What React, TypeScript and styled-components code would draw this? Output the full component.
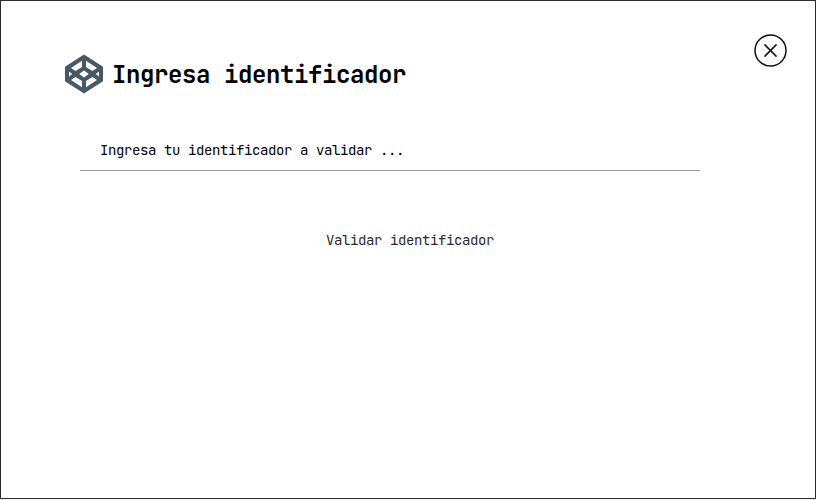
import React from "react";
import styled, { createGlobalStyle } from "styled-components";

const GlobalStyle = createGlobalStyle`
  * { box-sizing: border-box; }
  body { margin: 0; background: #f0f0f0; overflow: hidden; }
`;

const Dialog = styled.main`
  display: flex;
  flex-direction: column;
  width: 816px;
  height: 499px;
  border: 1px solid #2b2b2b;
  background: #fff;
  font-family: "JetBrains Mono", "DejaVu Sans Mono", monospace;
`;

const Header = styled.header`
  display: flex;
  justify-content: space-between;
  align-items: flex-start;
  padding: 33px 27px 0 63px;
  height: 129px;
`;

const Heading = styled.div`
  display: flex;
  align-items: center;
  gap: 8px;
  margin-top: 20px;
  height: 40px;
`;

const Title = styled.h1`
  margin: 0;
  padding-top: 2px;
  font-size: 24px;
  line-height: 40px;
  font-weight: 700;
  letter-spacing: -0.4px;
  color: #000;
  white-space: pre;
`;

const CloseButton = styled.button`
  display: block;
  width: 34px;
  height: 34px;
  padding: 0;
  border: 0;
  background: none;
`;

const Field = styled.input`
  width: 620px;
  height: 41px;
  margin-left: 79px;
  padding: 0 20px;
  border: 0;
  border-bottom: 1px solid #999;
  outline: 0;
  background: none;
  font: 14px "JetBrains Mono", "DejaVu Sans Mono", monospace;
  letter-spacing: -0.4px;
  color: #000;
`;

const Submit = styled.button`
  align-self: center;
  height: 40px;
  margin: 49px 0 0 4px;
  padding: 0;
  border: 0;
  background: none;
  font: 14px "JetBrains Mono", "DejaVu Sans Mono", monospace;
  letter-spacing: -0.4px;
  color: #2b2b2b;
`;

const PrismIcon = () => (
  <svg width="40" height="40" viewBox="0 0 40 40">
    <path
      fill="#455a64"
      fillRule="evenodd"
      d="M20 0.6 39 12.7V27.3L20 39.4 1 27.3V12.7Z
         M18 6.8 7 13.9 11.6 17.1 18 12.9Z
         M22 6.8V12.9L28.4 17.1 33 13.9Z
         M5 17.6V22.4L8.3 20Z
         M35 17.6 31.7 20 35 22.4Z
         M20 16.5 15.2 20 20 23.5 24.8 20Z
         M7 26.1 18 33.2V27.1L11.6 22.9Z
         M22 27.1V33.2L33 26.1 28.4 22.9Z"
    />
  </svg>
);

const CloseIcon = () => (
  <svg width="34" height="34" viewBox="0 0 34 34" fill="none" stroke="#111" strokeWidth="1.5" strokeLinecap="round">
    <circle cx="16.5" cy="16.5" r="15.5" />
    <path d="M10.9 10.9 22.1 22.1M22.1 10.9 10.9 22.1" />
  </svg>
);

export default function App() {
  return (
    <>
      <GlobalStyle />
      <Dialog>
        <Header>
          <Heading>
            <PrismIcon />
            <Title>Ingresa identificador</Title>
          </Heading>
          <CloseButton aria-label="Cerrar">
            <CloseIcon />
          </CloseButton>
        </Header>
        <Field defaultValue="Ingresa tu identificador a validar ..." />
        <Submit>Validar identificador</Submit>
      </Dialog>
    </>
  );
}
